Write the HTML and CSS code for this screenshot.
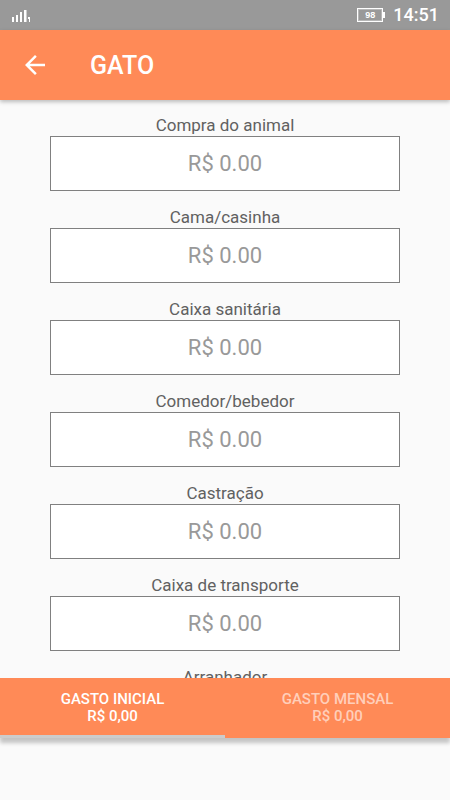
FILE: index.html
```html
<!DOCTYPE html>
<html lang="pt-BR">
<head>
<meta charset="utf-8">
<meta name="viewport" content="width=device-width, initial-scale=1">
<title>GATO</title>
<link rel="stylesheet" href="styles.css">
</head>
<body>
<div class="status">
  <svg class="signal" width="20" height="14" viewBox="0 0 20 14" fill="currentColor" aria-hidden="true">
    <path d="M1 9h2v5H1zM5 7h2v7H5zM9 4h2v10H9zM13 2h2.500v12H13zM17 9h2v5h-1v-3h-1z"/>
  </svg>
  <div class="status-right">
    <div class="battery">98</div>
    <time class="clock">14:51</time>
  </div>
</div>
<header class="appbar">
  <button class="back" type="button" aria-label="Voltar">
    <svg width="30" height="30" viewBox="0 0 24 24" fill="currentColor" aria-hidden="true">
      <path d="M20 11H7.830l5.590-5.590L12 4l-8 8 8 8 1.410-1.410L7.830 13H20z"/>
    </svg>
  </button>
  <h1 class="title">GATO</h1>
</header>
<main class="content">
  <form class="form">
    <div class="field"><label for="compra">Compra do animal</label><input id="compra" type="text" inputmode="decimal" placeholder="R$ 0.00"></div>
    <div class="field"><label for="cama">Cama/casinha</label><input id="cama" type="text" inputmode="decimal" placeholder="R$ 0.00"></div>
    <div class="field"><label for="caixa">Caixa sanitária</label><input id="caixa" type="text" inputmode="decimal" placeholder="R$ 0.00"></div>
    <div class="field"><label for="comedor">Comedor/bebedor</label><input id="comedor" type="text" inputmode="decimal" placeholder="R$ 0.00"></div>
    <div class="field"><label for="castracao">Castração</label><input id="castracao" type="text" inputmode="decimal" placeholder="R$ 0.00"></div>
    <div class="field"><label for="transporte">Caixa de transporte</label><input id="transporte" type="text" inputmode="decimal" placeholder="R$ 0.00"></div>
    <div class="field"><label for="arranhador">Arranhador</label><input id="arranhador" type="text" inputmode="decimal"></div>
  </form>
</main>
<nav class="tabs">
  <button class="tab active" type="button">GASTO INICIAL<br>R$ 0,00</button>
  <button class="tab" type="button">GASTO MENSAL<br>R$ 0,00</button>
</nav>
</body>
</html>
```
FILE: styles.css
```css
* {
  box-sizing: border-box;
}

body {
  margin: 0;
  height: 100vh;
  display: flex;
  flex-direction: column;
  background: #fafafa;
  color: #616161;
  font-family: Roboto, sans-serif;
  overflow: hidden;
}

.status {
  flex: none;
  display: flex;
  align-items: center;
  justify-content: space-between;
  height: 30px;
  padding: 0 11px;
  background: #999;
  color: #fff;
}

.status-right {
  display: flex;
  align-items: center;
  gap: 10px;
}

.battery {
  position: relative;
  width: 26px;
  height: 14px;
  border: 1px solid #fff;
  outline: 1px solid rgba(255, 255, 255, 0.3);
  outline-offset: -2px;
  font: 700 9px/12px "Liberation Sans", sans-serif;
  text-align: center;
}

.battery::after {
  content: "";
  position: absolute;
  top: 3px;
  right: -3px;
  width: 2px;
  height: 6px;
  background: #fff;
}

.clock {
  font-size: 18px;
  font-weight: 500;
  line-height: 30px;
}

.appbar {
  flex: none;
  position: relative;
  display: flex;
  align-items: center;
  gap: 40px;
  height: 70px;
  padding: 0 20px;
  background: #ff8a57;
  color: #fff;
  box-shadow: 0 2px 4px rgba(0, 0, 0, 0.25);
}

.back {
  display: flex;
  padding: 0;
  border: 0;
  background: none;
  color: inherit;
}

.title {
  margin: 0;
  font-size: 25px;
  font-weight: 500;
}

.content {
  flex: 1;
  min-height: 0;
  padding: 14px 50px 0;
  overflow-y: auto;
  scrollbar-width: none;
}

.form {
  display: flex;
  flex-direction: column;
  gap: 15px;
}

.field {
  display: flex;
  flex-direction: column;
}

.field label {
  font-size: 17px;
  line-height: 22px;
  text-align: center;
}

.field input {
  width: 100%;
  height: 55px;
  padding: 0 10px;
  border: 1px solid #808080;
  border-radius: 0;
  background: #fff;
  color: #616161;
  font: 22px/28px Roboto, sans-serif;
  text-align: center;
}

.field input::placeholder {
  color: #999;
  opacity: 1;
}

.tabs {
  flex: none;
  position: relative;
  display: flex;
  margin-bottom: 62px;
  background: #ff8a57;
  box-shadow: 0 5px 4px rgba(0, 0, 0, 0.22);
}

.tab {
  flex: 1;
  height: 60px;
  padding: 3px 0 0;
  border: 0;
  border-bottom: 3px solid transparent;
  background: none;
  color: rgba(255, 255, 255, 0.6);
  font: 500 15px/17px Roboto, sans-serif;
}

.tab.active {
  border-bottom-color: #ccc;
  color: #fff;
}
```
